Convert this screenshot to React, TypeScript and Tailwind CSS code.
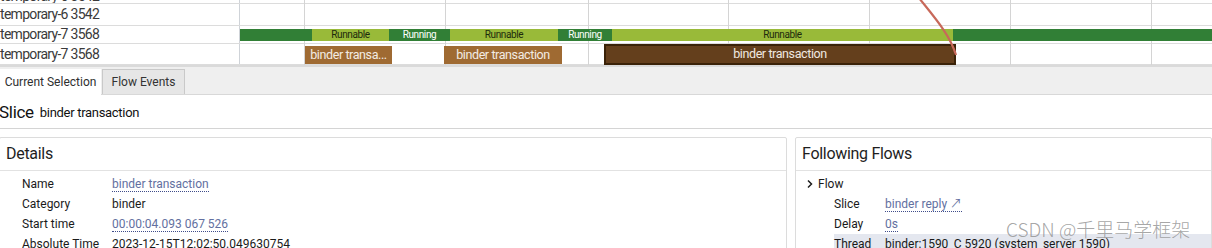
import React from "react";

const gridXs = [304, 445, 588, 728, 869, 1010, 1151];

function Label({ text, h }: { text: string; h: string }) {
  return (
    <div className={`flex ${h} border-b border-[#dcdcdc] overflow-hidden`}>
      <div className="w-[240px] shrink-0 border-r border-[#cfd3d8] text-[14px] text-[#3a3a3a] flex items-center tracking-[-0.7px]">{text}</div>
      <div className="flex-1" />
    </div>
  );
}

const states = [
  { x0: 240, x1: 312, c: "bg-[#317f36]", t: "" },
  { x0: 312, x1: 389, c: "bg-[#99ba39]", t: "Runnable" },
  { x0: 389, x1: 450, c: "bg-[#317f36]", t: "Running" },
  { x0: 450, x1: 558, c: "bg-[#99ba39]", t: "Runnable" },
  { x0: 558, x1: 612, c: "bg-[#317f36]", t: "Running" },
  { x0: 612, x1: 953, c: "bg-[#99ba39]", t: "Runnable" },
  { x0: 953, x1: 1212, c: "bg-[#317f36]", t: "" },
];

function Chevron() {
  return (
    <svg width="8" height="10" viewBox="0 0 8 10" className="mr-[4px]">
      <path d="M2 1.5 L5.5 5 L2 8.5" stroke="#1e1e1e" strokeWidth="1.5" fill="none" />
    </svg>
  );
}

export default function App() {
  return (
    <div className="w-[1212px] h-[248px] overflow-hidden bg-white relative" style={{ fontFamily: "Roboto, 'Noto Sans CJK SC', sans-serif" }}>
      {/* timeline */}
      <div className="relative h-[65px]">
        <div className="h-[4px] border-b border-[#dcdcdc] overflow-hidden flex">
          <div className="w-[240px] shrink-0 border-r border-[#cfd3d8] text-[14px] text-[#3a3a3a] leading-[14px] -mt-[11px] tracking-[-0.7px]">temporary-6 3542</div>
        </div>
        <Label text="temporary-6 3542" h="h-[22px]" />
        <Label text="temporary-7 3568" h="h-[18px]" />
        <Label text="temporary-7 3568" h="h-[21px]" />
        {/* grid lines */}
        {gridXs.map((x) => (
          <div key={x} className="absolute top-0 h-[65px] w-px bg-[#d4d4d4]" style={{ left: x }} />
        ))}
        {/* thread states */}
        {states.map((s, i) => (
          <div
            key={i}
            className={`absolute top-[29px] h-[12px] ${s.c} flex items-center justify-center text-[10px] leading-none tracking-[-0.4px] ${s.t === "Running" ? "text-white" : "text-[#1d2a0c]"}`}
            style={{ left: s.x0, width: s.x1 - s.x0 }}
          >
            {s.t}
          </div>
        ))}
        {/* slices */}
        <div className="absolute top-[46px] h-[18px] left-[305px] w-[87px] bg-[#9f6a32] text-[#f3ece4] text-[12.5px] flex items-center justify-center tracking-[-0.4px]">binder transa...</div>
        <div className="absolute top-[46px] h-[18px] left-[444px] w-[118px] bg-[#9f6a32] text-[#f3ece4] text-[12.5px] flex items-center justify-center tracking-[-0.4px]">binder transaction</div>
        <div className="absolute top-[44px] h-[21px] left-[604px] w-[352px] bg-[#643f1c] border-2 border-[#3a2208] text-[#f0e8e0] text-[12.5px] flex items-center justify-center tracking-[-0.4px]">binder transaction</div>
        {/* flow arrow */}
        <svg className="absolute left-0 top-0" width="1212" height="65">
          <path d="M919 -2 C 935 18, 950 35, 956 55" stroke="#c8695a" strokeWidth="2.2" fill="none" />
        </svg>
      </div>

      {/* tab bar */}
      <div className="h-[30px] bg-[#efefef] border-t-[2px] border-[#dadada] flex items-end border-b border-b-[#d8d8d8]">
        <div className="h-[26px] w-[101px] bg-white text-[12px] text-[#2f2f2f] flex items-center justify-center -mb-px">Current Selection</div>
        <div className="h-[25px] w-[83px] ml-[1px] bg-[#e6e6e6] border border-[#c9c9c9] border-b-0 text-[12px] text-[#333] flex items-center justify-center">Flow Events</div>
      </div>

      {/* content */}
      <div className="bg-white">
        <div className="h-[34px] flex items-center -ml-px pt-[3px] border-b border-[#d4d4d4]">
          <span className="text-[17px] text-[#111] tracking-[-0.3px]">Slice</span>
          <span className="text-[13px] text-[#111] ml-[6px] tracking-[-0.3px]">binder transaction</span>
        </div>
        <div className="flex gap-[8px] mt-[8px]">
          <div className="w-[788px] shrink-0 border border-[#dcdcdc] rounded-[2px] -ml-px">
            <div className="h-[33px] border-b border-[#e2e2e2] flex items-center pl-[6px] text-[16px] text-[#1e1e1e] tracking-[-0.3px]">Details</div>
            <div className="pt-[3px] text-[12px] text-[#1a1a1a]">
              {[
                ["Name", "binder transaction", true],
                ["Category", "binder", false],
                ["Start time", "00:00:04.093 067 526", true],
                ["Absolute Time", "2023-12-15T12:02:50.049630754", false],
              ].map(([k, v, link]) => (
                <div key={k as string} className="h-[20px] flex items-center">
                  <div className="w-[112px] pl-[22px] shrink-0">{k}</div>
                  <div className={link ? "text-[#6370a0] border-b border-dotted border-[#3f4c8a] leading-[14px]" : ""}>{v}</div>
                </div>
              ))}
            </div>
          </div>
          <div className="flex-1 border border-[#dcdcdc] rounded-[2px]">
            <div className="h-[33px] border-b border-[#e2e2e2] flex items-center pl-[6px] text-[16px] text-[#1e1e1e] tracking-[-0.3px]">Following Flows</div>
            <div className="pt-[3px] text-[12px] text-[#1a1a1a]">
              <div className="h-[20px] flex items-center pl-[10px]">
                <Chevron />Flow
              </div>
              {[
                ["Slice", "binder reply ↗", true, false],
                ["Delay", "0s", true, false],
                ["Thread", "binder:1590_C 5920 (system_server 1590)", false, true],
              ].map(([k, v, link, hl], i) => (
                <div key={i} className={`h-[20px] flex items-center ml-[38px] ${hl ? "bg-[#e4e7ef]" : ""}`}>
                  <div className="w-[51px] shrink-0">{k}</div>
                  <div className={link ? "text-[#6370a0] border-b border-dotted border-[#3f4c8a] leading-[14px]" : ""}>{v}</div>
                </div>
              ))}
            </div>
          </div>
        </div>
      </div>

      {/* watermark */}
      <div className="absolute left-[1006px] top-[215px] text-[19px] font-light text-[#8f8f8f]/80" style={{ fontFamily: "'Noto Sans CJK SC', sans-serif" }}>
        CSDN @千里马学框架
      </div>
    </div>
  );
}
